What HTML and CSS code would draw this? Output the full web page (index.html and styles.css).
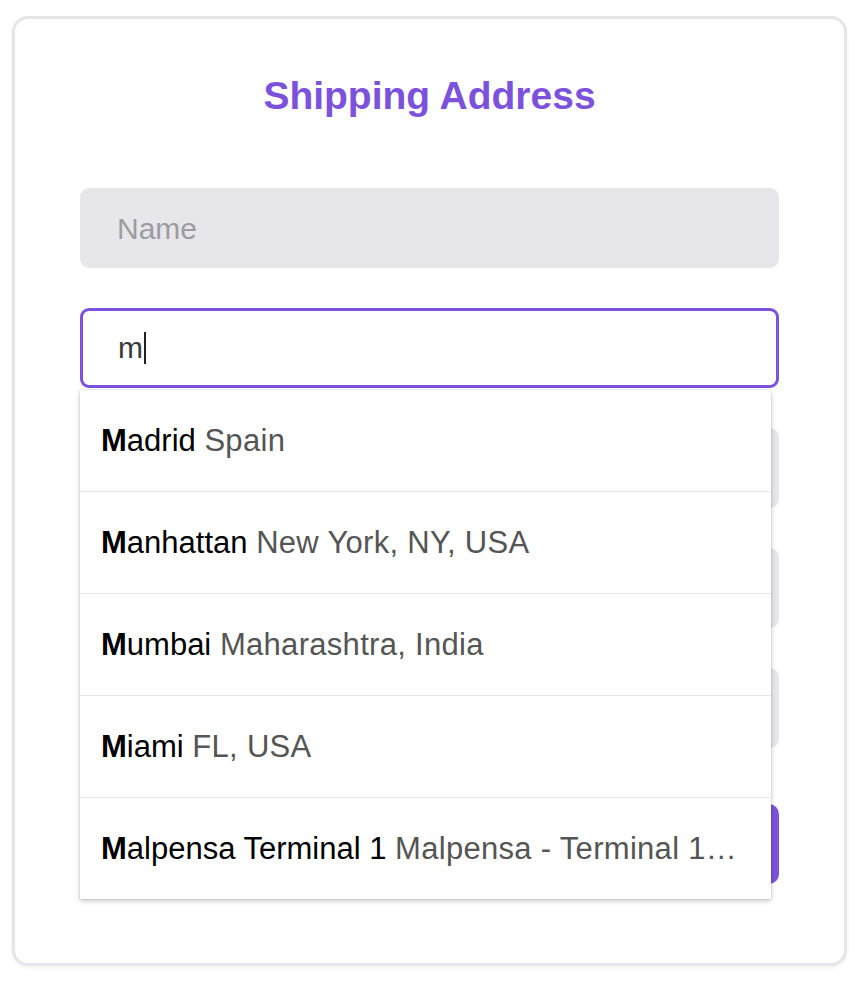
FILE: index.html
```html
<!DOCTYPE html>
<html lang="en">
<head>
<meta charset="utf-8">
<title>Shipping Address</title>
<link rel="stylesheet" href="styles.css">
</head>
<body>
  <div class="card">
    <h1 class="title">Shipping Address</h1>
    <div class="form">
      <div class="input placeholder">Name</div>
      <div class="field">
        <div class="input focused"><span class="typed">m</span><span class="caret"></span></div>
        <ul class="dropdown">
          <li class="option"><span class="city"><b>M</b>adrid</span> <span class="region">Spain</span></li>
          <li class="option"><span class="city"><b>M</b>anhattan</span> <span class="region">New York, NY, USA</span></li>
          <li class="option"><span class="city"><b>M</b>umbai</span> <span class="region">Maharashtra, India</span></li>
          <li class="option"><span class="city"><b>M</b>iami</span> <span class="region">FL, USA</span></li>
          <li class="option"><span class="city"><b>M</b>alpensa Terminal 1</span> <span class="region">Malpensa - Terminal 1…</span></li>
        </ul>
      </div>
      <div class="input"></div>
      <div class="input"></div>
      <div class="input"></div>
      <div class="btn"></div>
    </div>
  </div>
</body>
</html>
```
FILE: styles.css
```css
* { box-sizing: border-box; }

body {
  margin: 0;
  padding: 16px 18px 20px 12px;
  background: #ffffff;
  font-family: "Liberation Sans", Arial, sans-serif;
}

.card {
  border: 3px solid #e5e5ea;
  border-radius: 16px;
  background: #ffffff;
  padding: 55px 65px 79px;
  box-shadow: 0 2px 4px rgba(0, 0, 0, 0.05);
}

.title {
  margin: 0;
  font-size: 39px;
  line-height: 44px;
  font-weight: 700;
  text-align: center;
  color: #7c52dc;
}

.form {
  margin-top: 70px;
  display: flex;
  flex-direction: column;
  gap: 40px;
}

.field {
  position: relative;
}

.input {
  height: 80px;
  border-radius: 9px;
  background: #e7e7eb;
  padding: 2px 37px 0;
  display: flex;
  align-items: center;
  font-size: 30px;
  color: #9c9ca1;
}

.input.focused {
  background: #ffffff;
  border: 3px solid #7c52dc;
  padding: 0 35px;
  color: #3a3a3a;
}

.typed {
  line-height: 1;
}

.caret {
  display: inline-block;
  width: 2px;
  height: 32px;
  margin-left: 1px;
  background: #222222;
}

.btn {
  margin-top: 16px;
  height: 80px;
  border-radius: 10px;
  background: #7c52dc;
}

.dropdown {
  position: absolute;
  top: calc(100% + 2px);
  left: 0;
  width: 691px;
  margin: 0;
  padding: 0;
  list-style: none;
  background: #ffffff;
  box-shadow: 0 0 1px rgba(0, 0, 0, 0.25), 0 2px 5px rgba(0, 0, 0, 0.22);
  z-index: 2;
}

.option {
  height: 102px;
  padding: 0 20px 0 21px;
  border-bottom: 1px solid #e5e5ea;
  font-size: 31px;
  line-height: 101px;
  white-space: nowrap;
  color: #555555;
}

.option:last-child {
  height: 101px;
  border-bottom: none;
}

.city {
  color: #000000;
}

.city b {
  font-weight: 700;
}

.region {
  color: #555555;
  letter-spacing: 0.3px;
}
```
